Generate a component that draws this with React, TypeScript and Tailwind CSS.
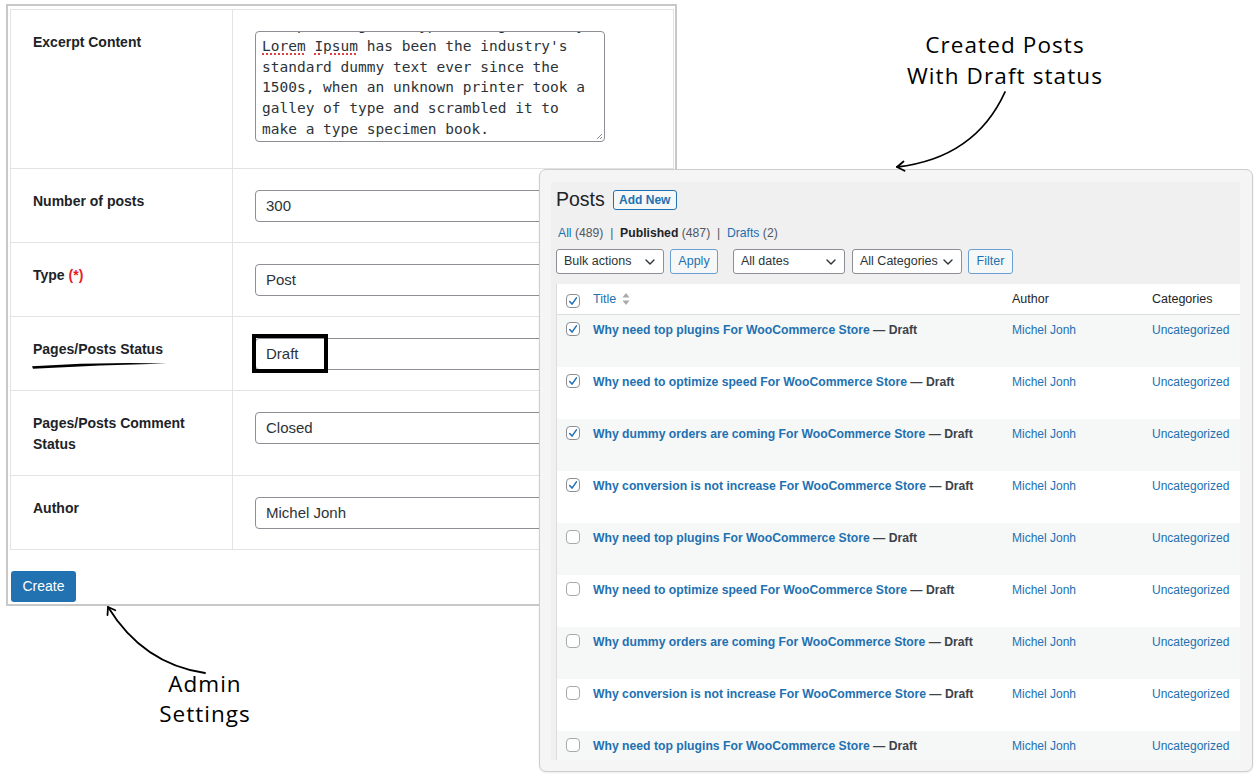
import React from "react";

const BLUE = "#2271b1";

const rows = [
  { t: "Why need top plugins For WooCommerce Store", c: true },
  { t: "Why need to optimize speed For WooCommerce Store", c: true },
  { t: "Why dummy orders are coming For WooCommerce Store", c: true },
  { t: "Why conversion is not increase For WooCommerce Store", c: true },
  { t: "Why need top plugins For WooCommerce Store", c: false },
  { t: "Why need to optimize speed For WooCommerce Store", c: false },
  { t: "Why dummy orders are coming For WooCommerce Store", c: false },
  { t: "Why conversion is not increase For WooCommerce Store", c: false },
  { t: "Why need top plugins For WooCommerce Store", c: false },
];

function Check({ checked }: { checked: boolean }) {
  return (
    <span
      className={
        "flex h-[14px] w-[14px] items-center justify-center rounded-[4px] border bg-white " +
        (checked ? "border-[#8c8f94]" : "border-[#a7aaad]")
      }
    >
      {checked && (
        <svg viewBox="0 0 14 14" className="h-[13px] w-[13px]">
          <path d="M3.2 7 L5.9 10 L11 2.8" fill="none" stroke={BLUE} strokeWidth="1.8" strokeLinecap="round" strokeLinejoin="round" />
        </svg>
      )}
    </span>
  );
}

function Chevron() {
  return (
    <svg viewBox="0 0 10 6" className="h-[6px] w-[10px]">
      <path d="M1 1 L5 5 L9 1" fill="none" stroke="#2c3338" strokeWidth="1.4" strokeLinecap="round" strokeLinejoin="round" />
    </svg>
  );
}

function Field({ children }: { children: React.ReactNode }) {
  return (
    <div className="relative h-[32px] w-[420px] rounded-[4px] border border-[#8c8f94] bg-white pl-[10px] text-[15px] leading-[30px] text-[#2c3338]">
      {children}
    </div>
  );
}

function Row({ h, label, children }: { h: string; label: React.ReactNode; children: React.ReactNode }) {
  return (
    <div className={"flex border-b border-[#e3e3e3] " + h}>
      <div className="w-[222px] shrink-0 border-r border-[#e3e3e3] pl-[22px] pt-[22px] text-[14px] font-bold leading-[21px] text-[#1d2327]">
        <div className="w-[175px]">{label}</div>
      </div>
      <div className="flex-1 pl-[22px] pt-[21px]">{children}</div>
    </div>
  );
}

export default function App() {
  return (
    <div className="relative h-[780px] w-[1260px] overflow-hidden bg-white font-['Liberation_Sans',Arial,sans-serif]">
      {/* Admin settings panel */}
      <div className="ml-[6px] mt-[4px] h-[602px] w-[671px] border-2 border-[#c8c8c8] pl-[2px] pt-[3px]">
        <div className="w-[664px] border-l border-r border-t border-[#e3e3e3]">
          <Row h="h-[159px]" label="Excerpt Content">
            <div className="relative h-[111px] w-[350px] overflow-hidden rounded-[4px] border border-[#8c8f94] bg-white">
              <div className="-mt-[17px] whitespace-pre pl-[6px] font-['DejaVu_Sans_Mono',monospace] text-[14.5px] leading-[20.75px] text-[#2c3338]">
                <div>the printing and typesetting industry.</div>
                <div>
                  <span className="underline decoration-[#e04040] decoration-dotted decoration-[1.5px] underline-offset-[3px]">Lorem</span>{" "}
                  <span className="underline decoration-[#e04040] decoration-dotted decoration-[1.5px] underline-offset-[3px]">Ipsum</span> has been the industry's
                </div>
                <div>standard dummy text ever since the</div>
                <div>1500s, when an unknown printer took a</div>
                <div>galley of type and scrambled it to</div>
                <div>make a type specimen book.</div>
              </div>
              <svg viewBox="0 0 8 8" className="absolute bottom-[1px] right-[1px] h-[8px] w-[8px]">
                <path d="M7 2 L2 7 M7 5 L5 7" stroke="#8c8f94" strokeWidth="1" fill="none" />
              </svg>
            </div>
          </Row>
          <Row h="h-[74px]" label="Number of posts">
            <Field>300</Field>
          </Row>
          <Row
            h="h-[74px]"
            label={
              <>
                Type <span className="text-[#e3231f]">(*)</span>
              </>
            }
          >
            <Field>Post</Field>
          </Row>
          <Row h="h-[74px]" label="Pages/Posts Status">
            <div className="relative">
              <Field>Draft</Field>
              <div className="absolute left-[-3px] top-[-4px] h-[39px] w-[76px] border-[4px] border-black" />
            </div>
          </Row>
          <Row h="h-[85px]" label="Pages/Posts Comment Status">
            <Field>Closed</Field>
          </Row>
          <Row h="h-[74px]" label="Author">
            <Field>Michel Jonh</Field>
          </Row>
        </div>
        <button className="ml-[1px] mt-[21px] flex h-[31px] w-[65px] items-center justify-center rounded-[3px] bg-[#2271b1] text-[14px] text-white">
          Create
        </button>
      </div>

      {/* Admin Settings label */}
      <div className="ml-[140px] mt-[63px] w-[130px] text-center font-['Open_Sans',sans-serif] text-[22.5px] leading-[30px] tracking-[1px] text-black">
        Admin
        <br />
        Settings
      </div>

      {/* Created posts label */}
      <div className="absolute left-[880px] top-[29px] w-[250px] text-center font-['Open_Sans',sans-serif] text-[22.5px] leading-[31px] tracking-[1.1px] text-black">
        Created Posts
        <br />
        With Draft status
      </div>

      {/* Posts screen */}
      <div className="absolute left-[539px] top-[169px] h-[603px] w-[714px] rounded-[7px] border border-[#cdcdcd] bg-[#f5f5f6] pb-[11px] pl-[11px] pr-[12px] pt-[12px] shadow-[0_1px_2px_rgba(0,0,0,0.08)]">
        <div className="h-full overflow-hidden bg-[#f0f0f1] pl-[5px]">
          <div className="mt-[8px] flex h-[20px] items-center gap-[8px]">
            <span className="text-[19.5px] leading-none text-[#1d2327]">Posts</span>
            <span className="flex h-[20px] w-[64px] items-center justify-center rounded-[3px] border border-[#2271b1] bg-[#f6f7f7] text-[12px] font-bold text-[#2271b1]">
              Add New
            </span>
          </div>
          <div className="ml-[2px] mt-[15px] h-[16px] whitespace-pre text-[12.2px] leading-[16px] text-[#50575e]">
            <span className="text-[#2271b1]">All</span> (489)  |  <span className="font-bold text-[#1d2327]">Published</span> (487)  |  <span className="text-[#2271b1]">Drafts</span> (2)
          </div>
          <div className="mt-[8px] flex h-[25px] text-[12.5px]">
            <div className="flex w-[108px] items-center justify-between rounded-[3px] border border-[#8c8f94] bg-white pl-[7px] pr-[8px] text-[#2c3338]">
              Bulk actions <Chevron />
            </div>
            <div className="ml-[6px] flex w-[48px] items-center justify-center rounded-[3px] border border-[#6a9fd0] bg-[#f6f7f7] text-[#2271b1]">
              Apply
            </div>
            <div className="ml-[15px] flex w-[112px] items-center justify-between rounded-[3px] border border-[#8c8f94] bg-white pl-[7px] pr-[8px] text-[#2c3338]">
              All dates <Chevron />
            </div>
            <div className="ml-[7px] flex w-[110px] items-center justify-between rounded-[3px] border border-[#8c8f94] bg-white pl-[7px] pr-[8px] text-[#2c3338]">
              All Categories <Chevron />
            </div>
            <div className="ml-[6px] flex w-[45px] items-center justify-center rounded-[3px] border border-[#6a9fd0] bg-[#f6f7f7] text-[#2271b1]">
              Filter
            </div>
          </div>

          <div className="mt-[10px] border-l border-[#dcdcde]">
            <div className="flex h-[31px] items-center border-b border-[#dcdcde] bg-white text-[12.5px] text-[#1d2327]">
              <div className="w-[36px] pl-[9px] pt-[4px]">
                <Check checked />
              </div>
              <div className="flex w-[419px] items-center gap-[6px] text-[#2271b1]">
                Title
                <svg viewBox="0 0 8 14" className="h-[14px] w-[8px]">
                  <path d="M4 1 L7.5 5.5 L0.5 5.5 Z M0.5 8.5 L7.5 8.5 L4 13 Z" fill="#a7aaad" />
                </svg>
              </div>
              <div className="w-[140px]">Author</div>
              <div>Categories</div>
            </div>
            {rows.map((r, i) => (
              <div key={i} className={"flex h-[52px] items-start " + (i % 2 === 0 ? "bg-[#f6f7f7]" : "bg-white")}>
                <div className="w-[36px] pl-[9px] pt-[7px]">
                  <Check checked={r.c} />
                </div>
                <div className="w-[419px] whitespace-nowrap pt-[6px] text-[12.2px] font-bold leading-[18px] text-[#2271b1]">
                  {r.t}
                  <span className="text-[#3c434a]"> — Draft</span>
                </div>
                <div className="w-[140px] pt-[6px] text-[12px] leading-[18px] text-[#2271b1]">Michel Jonh</div>
                <div className="pt-[6px] text-[12px] leading-[18px] text-[#2271b1]">Uncategorized</div>
              </div>
            ))}
          </div>
        </div>
      </div>

      {/* Hand-drawn annotations */}
      <svg className="pointer-events-none absolute left-0 top-0" width="1260" height="780" viewBox="0 0 1260 780">
        <path d="M32 366.2 Q100 361.6 167 363.4 Q100 364.6 33 368.8 Z" fill="#000" />
        <path d="M1005 92 Q975 158 897 167" fill="none" stroke="#000" strokeWidth="1.8" strokeLinecap="round" />
        <path d="M903.5 161.5 L897 167 L904.5 170.8" fill="none" stroke="#000" strokeWidth="1.8" strokeLinecap="round" strokeLinejoin="round" />
        <path d="M205 673 Q143 664 108 607" fill="none" stroke="#000" strokeWidth="1.8" strokeLinecap="round" />
        <path d="M107.5 615 L108 607 L115.3 610.2" fill="none" stroke="#000" strokeWidth="1.8" strokeLinecap="round" strokeLinejoin="round" />
      </svg>
    </div>
  );
}
